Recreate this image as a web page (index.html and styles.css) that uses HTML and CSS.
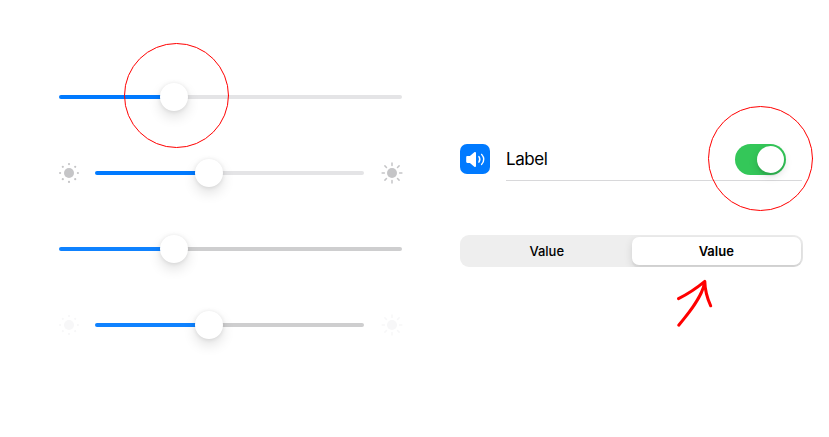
FILE: index.html
```html
<!DOCTYPE html>
<html lang="en">
<head>
<meta charset="utf-8">
<title>Controls</title>
<link rel="stylesheet" href="styles.css">
</head>
<body>
<svg class="symbols" aria-hidden="true">
  <symbol id="sun-min" viewBox="-12 -12 24 24">
    <circle r="5"/>
    <circle cx="0" cy="-8.9" r="1.1"/><circle cx="0" cy="8.9" r="1.1"/>
    <circle cx="-8.9" cy="0" r="1.1"/><circle cx="8.9" cy="0" r="1.1"/>
    <circle cx="-6.2" cy="-6.2" r="1.1"/><circle cx="6.2" cy="-6.2" r="1.1"/>
    <circle cx="-6.2" cy="6.2" r="1.1"/><circle cx="6.2" cy="6.2" r="1.1"/>
  </symbol>
  <symbol id="sun-max" viewBox="-12 -12 24 24">
    <circle r="5"/>
    <path class="rays" d="M0-7.6V-9.9M0 7.6V9.9M-7.6 0H-9.9M7.6 0H9.9M-5.5-5.5L-7.1-7.1M5.5-5.5L7.1-7.1M-5.5 5.5L-7.1 7.1M5.5 5.5L7.1 7.1"/>
  </symbol>
</svg>
<main class="board">
  <section class="sliders">
    <div class="row">
      <div class="slider"><span class="fill wide"></span><span class="knob"></span><span class="rest"></span></div>
    </div>
    <div class="row">
      <svg class="sun sun-small"><use href="#sun-min"/></svg>
      <div class="slider"><span class="fill narrow"></span><span class="knob"></span><span class="rest"></span></div>
      <svg class="sun sun-large"><use href="#sun-max"/></svg>
    </div>
    <div class="row dim">
      <div class="slider"><span class="fill wide"></span><span class="knob"></span><span class="rest"></span></div>
    </div>
    <div class="row dim">
      <svg class="sun sun-small"><use href="#sun-min"/></svg>
      <div class="slider"><span class="fill narrow"></span><span class="knob"></span><span class="rest"></span></div>
      <svg class="sun sun-large"><use href="#sun-max"/></svg>
    </div>
  </section>
  <section class="settings">
    <div class="setting">
      <span class="app-icon">
        <svg width="30" height="30" viewBox="0 0 30 30">
          <path fill="#fff" d="M6.200 13.400c0-.8.4-1.300 1.200-1.300H9.900L14.300 8.300c.8-.7 1.700-.4 1.700.6v13.200c0 1-.9 1.200-1.700.6L9.900 18.900H7.400c-.8 0-1.200-.4-1.200-1.200z"/>
          <path fill="none" stroke="#fff" stroke-width="1.400" stroke-linecap="round" d="M18.900 12.600q1.900 2.800 0 5.600M21.600 10.400q4.400 5 0 10"/>
        </svg>
      </span>
      <div class="setting-body">
        <span class="label">Label</span>
        <span class="toggle"><span class="toggle-knob"></span></span>
      </div>
    </div>
    <div class="segments">
      <span class="segment">Value</span>
      <span class="segment selected">Value</span>
    </div>
  </section>
  <svg class="notes" width="829" height="437" viewBox="0 0 829 437">
    <circle cx="176.500" cy="95.500" r="52"/>
    <circle cx="760.500" cy="158.500" r="52"/>
    <path d="M678.700 325.200C689 313 702 297 704.500 283M678.500 298.600C688 294 698 287 704.800 281.400C705 290 707.500 299 710.700 305.800"/>
  </svg>
</main>
</body>
</html>
```
FILE: styles.css
```css
* { box-sizing: border-box; }
body {
  margin: 0;
  background: #fff;
  color: #000;
  font-family: Inter, "Liberation Sans", sans-serif;
}
.symbols { position: absolute; width: 0; height: 0; }
.board {
  position: relative;
  display: flex;
  width: 829px;
  height: 437px;
  padding-left: 59px;
  gap: 58px;
  overflow: hidden;
}
.sliders {
  display: flex;
  flex-direction: column;
  width: 343px;
  padding-top: 83px;
  gap: 48px;
}
.row { display: flex; align-items: center; height: 28px; }
.slider { display: flex; align-items: center; flex: 1; height: 28px; }
.fill { height: 4px; background: #007aff; border-radius: 2px 0 0 2px; margin-right: -4px; }
.wide { width: 105px; }
.narrow { width: 104px; }
.rest { flex: 1; height: 4px; margin-left: -4px; background: #e4e4e6; border-radius: 0 2px 2px 0; }
.knob {
  position: relative;
  z-index: 1;
  flex: none;
  width: 28px;
  height: 28px;
  border-radius: 50%;
  background: #fff;
  box-shadow: 0 6px 13px rgba(0, 0, 0, .12), 0 .5px 4px rgba(0, 0, 0, .1);
}
.sun { width: 24px; height: 24px; fill: #c5c5c7; color: #c5c5c7; flex: none; }
.rays { fill: none; stroke: currentColor; stroke-width: 1.5px; stroke-linecap: round; }
.sun-small { margin: 0 14.500px 0 -2.500px; }
.sun-large { margin: 0 -1.500px 0 15.500px; }
.dim .fill { background: #0f82ff; }
.dim .rest { background: #cececf; }
.dim .sun { fill: #f7f7f8; color: #f7f7f8; }
.settings { width: 343px; padding-top: 138px; }
.setting { display: flex; align-items: flex-start; gap: 16px; height: 43px; }
.app-icon {
  width: 30px;
  height: 30px;
  margin-top: 6px;
  border-radius: 7px;
  background: #007aff;
}
.app-icon svg { display: block; }
.setting-body {
  display: flex;
  flex: 1;
  align-items: center;
  justify-content: space-between;
  height: 43px;
  margin-right: 1px;
  padding-right: 16px;
  border-bottom: 1px solid #d8d8da;
}
.label { font-size: 17px; line-height: 22px; letter-spacing: -.43px; }
.toggle {
  display: flex;
  justify-content: flex-end;
  width: 51px;
  height: 31px;
  padding: 2px;
  border-radius: 16px;
  background: #34c759;
}
.toggle-knob {
  width: 27px;
  height: 27px;
  border-radius: 50%;
  background: #fff;
  box-shadow: 0 3px 8px rgba(0, 0, 0, .15), 0 3px 1px rgba(0, 0, 0, .06);
}
.segments {
  display: flex;
  height: 32px;
  margin-top: 54px;
  padding: 2px;
  border-radius: 9px;
  background: #eee;
  overflow: hidden;
}
.segment {
  display: flex;
  align-items: center;
  justify-content: center;
  width: 170px;
  font-size: 13px;
  font-weight: 500;
}
.selected {
  border-radius: 7px;
  background: #fff;
  font-weight: 600;
  box-shadow: 0 3px 8px rgba(0, 0, 0, .12), 0 3px 1px rgba(0, 0, 0, .04);
}
.notes { position: absolute; top: 0; left: 0; z-index: 2; fill: none; stroke: #f00; stroke-linecap: round; stroke-linejoin: round; }
.notes circle { stroke-width: 1px; }
.notes path { stroke-width: 3px; }
```
